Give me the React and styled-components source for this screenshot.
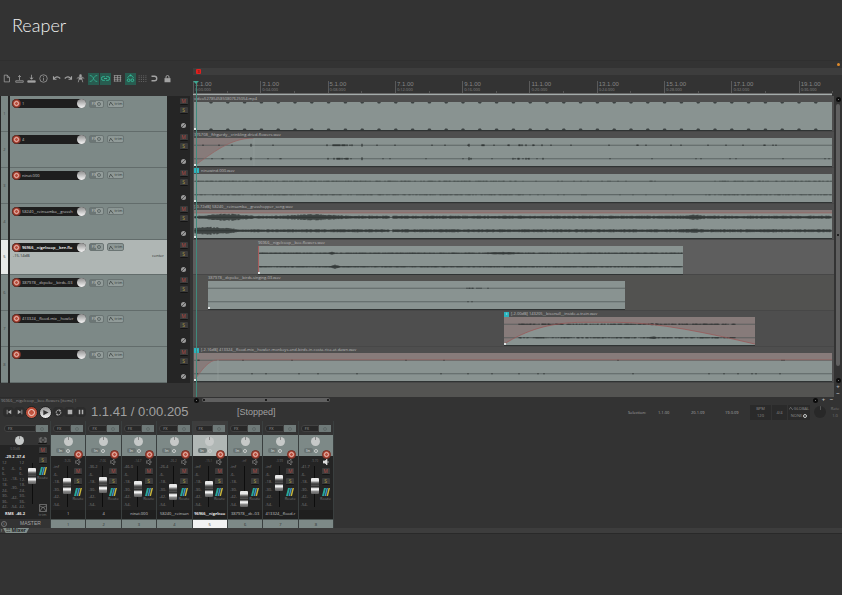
import React, { useState } from "react";
import styled, { createGlobalStyle, css } from "styled-components";

const TRACKS = [
  { id: 1, name: "1", short: "1", peak: "-inf", vol: "-9.26", fader: 54 },
  { id: 2, name: "4", short: "4", peak: "-36.2", vol: "-7.06", fader: 58 },
  { id: 3, name: "ninat.000", short: "ninat.000", peak: "-46.0", vol: "-14.7", fader: 42 },
  { id: 4, name: "58240__reinsamba__grassh", short: "58240__reinsan", peak: "-26.4", vol: "-26.2", fader: 30 },
  { id: 5, name: "96966__nigelcoop__bee-flo", short: "96966__nigelcoo", peak: "-inf", vol: "-15.1", fader: 42 },
  { id: 6, name: "387978__dcpoke__birds..03", short: "387978__dc..03", peak: "-inf", vol: "-inf", fader: 2 },
  { id: 7, name: "413324__flood-mix__howler", short: "413324__flood-r", peak: "-inf", vol: "-3.99", fader: 66 },
  { id: 8, name: "", short: "", peak: "-41.7", vol: "-9.70", fader: 54, loud: true },
];

// start and length are in timeline units, the whole timeline is 638 long
const TIMELINE = 638;
const CLIPS = [
  { title: "video5278545850807625054.mp4", start: 0, length: 638, wave: "ticks" },
  { title: "376708__fthgurdy__crinkling-dried-flowers.wav", start: 0, length: 638, wave: "crackle", fadeIn: 60 },
  { title: "ninawind.000.wav", start: 0, length: 638, wave: "wind", badge: true },
  { title: "[-0.72dB] 58240__reinsamba__grasshopper_song.wav", start: 0, length: 638, wave: "grass", gain: 3 },
  { title: "96966__nigelcoop__bee-flowers.wav", start: 64, length: 425, wave: "bees", edge: true },
  { title: "387978__dcpoke__birds-singing-03.wav", start: 14, length: 417, wave: "birds" },
  { title: "[-2.00dB] 143205__bisonull__inside-a-train.wav", start: 310, length: 251, wave: "train", badge: true, arch: true },
  { title: "[-2.16dB] 413324__flood-mix__howler-monkeys-and-birds-in-costa-rica-at-dawn.wav", start: 0, length: 638, wave: "dawn", badge: true, gain: 7, fadeIn: 24 },
];

const RULER = [
  ["1.1.00", "0:00.000"],
  ["3.1.00", "0:04.000"],
  ["5.1.00", "0:08.000"],
  ["7.1.00", "0:12.000"],
  ["9.1.00", "0:16.000"],
  ["11.1.00", "0:20.000"],
  ["13.1.00", "0:24.000"],
  ["15.1.00", "0:28.000"],
  ["17.1.00", "0:32.000"],
  ["19.1.00", "0:36.000"],
];

function random(seed) {
  let s = seed;
  return () => {
    s = (s * 16807) % 2147483647;
    return s / 2147483647;
  };
}

const near = (x, c, w) => Math.max(0, 1 - Math.abs(x - c) / w);

// height of the wave on one side of its centre line
const LEVELS = {
  crackle: (x, r, lower) => {
    const burst = near(x, 145, 14) + near(x, 332, 20) * 0.3 + near(x, 280, 14) * 0.2;
    if ([57, 168, 275].includes(x)) return 1.5;
    if (r > 0.95) return lower ? 0.5 : 0.7;
    return r < burst ? 0.9 : 0;
  },
  wind: (x, r) => {
    const busy = x < 330 || x > 520;
    return r > (busy ? 0.5 : 0.92) ? 0.2 + r * 0.4 : 0.1;
  },
  grass: (x, r, lower) => {
    const bump = lower
      ? near(x, 15, 30) * 3.4 + near(x, 500, 15) * 0.6
      : near(x, 32, 28) * 2.6 + near(x, 118, 40) * 1.8 + near(x, 500, 14) * 1.3;
    if (x > 195 && x < 199) return 0.2;
    return 0.9 + r * 0.7 + Math.min(bump, 2.4) * (0.7 + r * 0.3);
  },
  bees: (x, r, lower) => {
    const bump = lower ? near(x, 77, 5) * 1.6 : near(x, 74, 3) + near(x, 245, 22) * 0.7;
    return 0.3 + r * 0.4 + bump;
  },
  birds: (x, r, lower) => (x > 258 && x < 282 && r > (lower ? 0.93 : 0.6) ? 0.5 : 0),
  train: (x, r) => (x > 14 && x < 232 && r > 0.2 ? 0.2 + r * 0.5 + near(x, 150, 6) * 0.7 : 0),
  dawn: (x, r, lower) => (r > (lower ? 0.975 : 0.99) ? 0.6 : 0),
};

function wavePath(kind, length, y, lower) {
  const next = random(kind.length * 7919 + (lower ? 31 : 17));
  let d = "";
  for (let x = 1; x < length; x++) {
    const a = LEVELS[kind](x, next(), lower);
    if (a > 0) d += `M${x} ${(y - a).toFixed(1)}V${(y + a).toFixed(1)}`;
  }
  return d;
}

function tickPath(length) {
  let d = "";
  for (let x = 17; x < length; x += 16.8) {
    d += `M${x - 2} 0h4l-1 1.6h-2zM${x - 2} 29h4l-1-1.6h-2z`;
  }
  return d;
}

function Wave({ clip }) {
  const { length: w, wave, fadeIn, gain = 0, arch, edge } = clip;
  const archPath = `M0 28C22 14 45 5.500 80 5.500H112C155 5.500 205 17 ${w} 28`;
  const fadePath = `${29}C${fadeIn * 0.3} ${16 + gain / 3} ${fadeIn * 0.6} ${gain} ${fadeIn} ${gain}`;
  return (
    <svg width="100%" height="100%" viewBox={`0 0 ${w} 29`} preserveAspectRatio="none" aria-hidden="true">
      {gain > 0 && <path d={`M0 0H${w}V${gain}H0z`} fill="#877b7a" />}
      {fadeIn && <path d={`M0 ${gain}V${fadePath}z`} fill="#877b7a" />}
      {arch && <path d={`${archPath}V0H0z`} fill="#877b7a" />}
      {wave === "ticks" ? (
        <path d={tickPath(w)} fill="#3c4242" />
      ) : (
        <>
          <path d={`M0 7.5H${w}M0 21.5H${w}`} stroke="#4b5251" strokeWidth="0.7" />
          <path
            d={wavePath(wave, w, 7.5, false) + wavePath(wave, w, 21.5, true)}
            stroke={wave === "wind" ? "#3d4443" : "#1c2020"}
            strokeWidth="1"
            opacity="0.9"
          />
        </>
      )}
      {gain > 0 && <path d={`M${fadeIn || 0} ${gain}H${w}`} stroke="#97605f" strokeWidth="0.7" />}
      {fadeIn && (
        <>
          <path d={`M0 ${fadePath}`} fill="none" stroke="#97605f" strokeWidth="0.7" />
          <path d={`M${fadeIn} ${gain}V29`} stroke="#98a2a0" strokeWidth="0.6" />
        </>
      )}
      {arch && <path d={archPath} fill="none" stroke="#9c5252" strokeWidth="0.7" />}
      {edge && <path d="M0.5 0V29" stroke="#a85c5c" />}
      <path d="M0 27h2v2H0z" fill="#dfe4e3" />
    </svg>
  );
}

const TOOLS = [
  { label: "New project", art: <path d="M3 1.5h4l3 3v6H3zM7 1.5v3h3" /> },
  { label: "Open project", art: <path d="M1 9v2h10V9zM6 8V2M4 4l2-2 2 2" /> },
  { label: "Save project", art: <path d="M1 9h10v2H1zM6 1v6M4 5l2 2 2-2" />, fill: true },
  { label: "Project settings", art: <path d="M6 1a5 5 0 100 10A5 5 0 006 1zM6 5v4M6 3v1" /> },
  { label: "Undo", art: <path d="M2 3v4h4M2 7c3-4 6-4 9-1" strokeWidth="1.500" /> },
  { label: "Redo", art: <path d="M10 3v4H6M10 7C7 3 4 3 1 6" strokeWidth="1.500" /> },
  { label: "Metronome", art: <path d="M5 1h2v3H5zM4 5h4v2H4zM4 7L3 11M8 7l1 4M1 6l3-2M11 6L8 4" />, fill: true },
  { label: "Crossfade", on: true, art: <path d="M1 2c6 0 4 8 10 8M1 10c6 0 4-8 10-8" /> },
  { label: "Grouping", on: true, art: <path d="M5 8.500H3a2.500 2.500 0 010-5h2M7 3.500h2a2.500 2.500 0 010 5H7M4 6h4" strokeWidth="1.300" /> },
  { label: "Ripple edit", art: <path d="M1 2h10M1 4.500h10M1 7h10M1 9.500h10M2 2v8M6 2v8M10 2v8" strokeWidth="0.900" /> },
  { label: "Envelopes", on: true, art: <path d="M2 5l4-4 4 4M6 1v2M3.500 6.500a1.800 1.800 0 100 3.600 1.800 1.800 0 000-3.600zM8.500 6.500a1.800 1.800 0 100 3.600 1.800 1.800 0 000-3.600z" strokeWidth="1.300" /> },
  { label: "Grid lines", art: <path d="M1.500 2v9M4.500 2v9M7.500 2v9M10.500 2v9" strokeDasharray="1 1.500" opacity="0.800" /> },
  { label: "Snap", art: <path d="M2 3h4a3 3 0 010 6H2" strokeWidth="1.800" /> },
  { label: "Lock", art: <path d="M4 6V4a2 2 0 014 0v2" strokeWidth="1.300" />, body: true },
];

function App() {
  const [selected, setSelected] = useState(5);

  return (
    <Page>
      <GlobalStyle />
      <Title>
        <h1>Reaper</h1>
      </Title>

      <Workspace>
        {/* track control panel */}
        <Panel>
          <Toolbar>
            {TOOLS.map((tool) => (
              <ToolButton key={tool.label} $on={tool.on} aria-label={tool.label}>
                <svg viewBox="0 0 12 12" width="9" height="9">
                  <g fill={tool.fill ? "currentColor" : "none"} stroke="currentColor">
                    {tool.art}
                  </g>
                  {tool.body && <path d="M2 5.500h8v5.500H2z" fill="currentColor" />}
                </svg>
              </ToolButton>
            ))}
          </Toolbar>
          <Rows>
            {TRACKS.map((track) => (
              <Track key={track.id} track={track} selected={track.id === selected} onSelect={setSelected} />
            ))}
          </Rows>
          <Filler />
          <Status>96966__nigelcoop__bee-flowers [items] 1</Status>
        </Panel>

        {/* timeline */}
        <Arrange>
          <Alert />
          <MarkerBar>
            <Marker>3</Marker>
          </MarkerBar>
          <Timeline>
            <Ruler>
              {RULER.map(([beat, time]) => (
                <Mark key={beat}>
                  <b>{beat}</b>
                  <span>{time}</span>
                </Mark>
              ))}
            </Ruler>
            <LoopLine />
            <Lanes>
              {CLIPS.map((clip, i) => (
                <Lane key={clip.title} $selected={i + 1 === selected} $odd={i === 5}>
                  <ClipBox
                    style={{
                      marginLeft: `${(clip.start / TIMELINE) * 100}%`,
                      width: `${(clip.length / TIMELINE) * 100}%`,
                    }}
                  >
                    <ClipTitle>
                      {clip.badge && <Badge>i</Badge>}
                      {clip.title}
                    </ClipTitle>
                    <ClipBody>
                      <Wave clip={clip} />
                    </ClipBody>
                  </ClipBox>
                </Lane>
              ))}
            </Lanes>
            <EmptyLane />
            <Playhead />
          </Timeline>
          <VerticalScroll>
            <Dot />
            <Thumb />
            <Dot />
            <Zoom aria-label="Zoom in vertically">+</Zoom>
            <Zoom aria-label="Zoom out vertically">−</Zoom>
          </VerticalScroll>
          <HorizontalScroll>
            <Dot />
            <HorizontalThumb>
              <i />
              <i />
              <i />
            </HorizontalThumb>
            <Spacer />
            <Dot />
            <Zoom aria-label="Zoom in">+</Zoom>
            <Zoom aria-label="Zoom out">−</Zoom>
          </HorizontalScroll>
        </Arrange>
      </Workspace>

      <Transport>
        <Controls>
          <ControlButton aria-label="Go to start">
            <svg viewBox="0 0 8 8" width="6" height="6"><path d="M1 1h1v6H1zM7 1v6L2.500 4z" /></svg>
          </ControlButton>
          <ControlButton aria-label="Go to end">
            <svg viewBox="0 0 8 8" width="6" height="6"><path d="M6 1h1v6H6zM1 1v6l4.500-3z" /></svg>
          </ControlButton>
          <BigButton $red aria-label="Record">
            <Ring />
          </BigButton>
          <BigButton aria-label="Play">
            <svg viewBox="0 0 8 8" width="7" height="7"><path d="M1.500 1v6L7.500 4z" fill="#333" /></svg>
          </BigButton>
          <ControlButton aria-label="Repeat">
            <svg viewBox="0 0 8 8" width="7" height="7">
              <path d="M1.500 5a2.700 2.700 0 014-3.300M6.500 3a2.700 2.700 0 01-4 3.300" fill="none" stroke="#aaa" />
              <path d="M5 0l2 2-2 1zM3 8L1 6l2-1z" />
            </svg>
          </ControlButton>
          <ControlButton aria-label="Stop">
            <svg viewBox="0 0 8 8" width="6" height="6"><path d="M1 1h6v6H1z" /></svg>
          </ControlButton>
          <ControlButton aria-label="Pause">
            <svg viewBox="0 0 8 8" width="6" height="6"><path d="M1 1h2v6H1zM5 1h2v6H5z" /></svg>
          </ControlButton>
        </Controls>
        <Clock>1.1.41 / 0:00.205</Clock>
        <State>[Stopped]</State>
        <Selection>
          <span>Selection:</span>
          <span>1.1.00</span>
          <span>20.1.09</span>
          <span>19.0.09</span>
        </Selection>
        <Info $width={21}>
          <span>BPM</span>
          <span>120</span>
        </Info>
        <Info $width={15}>
          <span>4/4</span>
        </Info>
        <Info $width={22}>
          <span>
            <svg viewBox="0 0 6 4" width="5" height="4"><path d="M0 4l2-3 2 3 1-1" fill="none" stroke="#888" strokeWidth="0.700" /></svg>
            GLOBAL
          </span>
          <span>
            NONE <Gear />
          </span>
        </Info>
        <RateKnob aria-label="Playback rate" />
        <Rate>
          <span>Rate</span>
          <span>1.0</span>
        </Rate>
      </Transport>

      <Mixer>
        <Master />
        {TRACKS.map((track) => (
          <Channel key={track.id} track={track} selected={track.id === selected} />
        ))}
      </Mixer>
      <Dock>
        <span>!</span>
        <DockTab>☷ Mixer</DockTab>
      </Dock>
    </Page>
  );
}

export default App;

function Track({ track, selected, onSelect }) {
  return (
    <Row>
      <RowNumber $selected={selected} onClick={() => onSelect(track.id)}>
        {track.id}
      </RowNumber>
      <RowPanel $selected={selected}>
        <RowTop>
          <NamePill>
            <Arm aria-label={`Arm track ${track.id}`}>
              <i />
            </Arm>
            <NameInput $selected={selected} defaultValue={track.name} aria-label={`Name of track ${track.id}`} />
            <VolumeKnob aria-label={`Volume of track ${track.id}`} />
          </NamePill>
          <SmallButton $width={15} $split>
            <span>FX</span>
            <Power />
          </SmallButton>
          <SmallButton $width={17}>
            <svg viewBox="0 0 6 5" width="5" height="5"><path d="M0 5l2-4 3 4" fill="none" stroke="#2e3434" strokeWidth="0.800" /></svg>
            trim
          </SmallButton>
        </RowTop>
        {selected && (
          <RowInfo>
            <span>-15.14dB</span>
            <span>center</span>
          </RowInfo>
        )}
      </RowPanel>
      <RowButtons>
        <MuteButton aria-label={`Mute track ${track.id}`}>M</MuteButton>
        <SoloButton aria-label={`Solo track ${track.id}`}>S</SoloButton>
        <Phase aria-label={`Invert phase of track ${track.id}`} />
      </RowButtons>
    </Row>
  );
}

function RouteIcon() {
  return (
    <svg viewBox="0 0 8 8" width="8" height="8">
      <path d="M2 0h2L2 8H0z" fill="#28a898" />
      <path d="M4.500 0h1.500l-2 8H2.500z" fill="#3f8fc4" />
      <path d="M6.500 0H8L6 8H4.500z" fill="#c8b53c" />
    </svg>
  );
}

function Channel({ track, selected }) {
  return (
    <Strip>
      <FxRow $selected={selected}>
        <FxLabel>FX</FxLabel>
        <FxPower>
          <Power />
        </FxPower>
      </FxRow>
      <PanPanel $selected={selected}>
        <PanKnob aria-label={`Pan of channel ${track.id}`} />
        <InputRow>
          <InButton>In</InButton>
          <Gear />
        </InputRow>
        <ChannelArm aria-label={`Arm channel ${track.id}`}>
          <i />
        </ChannelArm>
      </PanPanel>
      <ChannelBody>
        <Scale>
          <span>{track.peak}</span>
          {["-6-", "-18-", "-30-", "-42-", "-54-"].map((db) => (
            <span key={db}>{db}</span>
          ))}
        </Scale>
        <FaderColumn>
          <small>{track.vol}</small>
          <Fader type="range" min="0" max="100" defaultValue={track.fader} aria-label={`Volume of channel ${track.id}`} />
        </FaderColumn>
        <ChannelButtons>
          <svg viewBox="0 0 6 6" width="6" height="6">
            <path d="M0 2h2l2-2v6L2 4H0zM5 2v2" fill={track.loud ? "#ddd" : "none"} stroke={track.loud ? "#ddd" : "#888"} strokeWidth="0.700" />
          </svg>
          <MuteButton aria-label={`Mute channel ${track.id}`}>M</MuteButton>
          <SoloButton aria-label={`Solo channel ${track.id}`}>S</SoloButton>
          <RouteButton>
            <RouteIcon />
            Route
          </RouteButton>
        </ChannelButtons>
      </ChannelBody>
      <ChannelName $selected={selected}>{track.short}</ChannelName>
      <ChannelNumber $selected={selected}>{track.id}</ChannelNumber>
    </Strip>
  );
}

function Master() {
  const scale = ["12", "6", "6-", "12-", "18-", "24-", "30-", "36-", "42-"];
  return (
    <Strip>
      <FxRow $master>
        <FxLabel>FX</FxLabel>
        <FxPower>
          <Power />
        </FxPower>
      </FxRow>
      <MasterTop>
        <PanKnob aria-label="Master pan" />
        <MonoButton aria-label="Mono">
          <svg viewBox="0 0 8 6" width="8" height="6">
            <path d="M3 1H1v4h2M5 1h2v4H5M2.500 3h3" fill="none" stroke="#888" strokeWidth="0.800" />
          </svg>
        </MonoButton>
      </MasterTop>
      <MasterBody>
        <MasterMeter>
          <small>0.00dB</small>
          <strong>-29.2 -37.4</strong>
          <MeterScales>
            <Scale $tight>{scale.map((n, i) => <span key={i}>{n}</span>)}</Scale>
            <Scale>{["-6-", "-18-", "-30-", "-42-", "-54-"].map((n) => <span key={n}>{n}</span>)}</Scale>
            <Scale $tight>{scale.map((n, i) => <span key={i}>{n}</span>)}</Scale>
          </MeterScales>
          <strong>RMS &nbsp;-46.2</strong>
        </MasterMeter>
        <MasterFader>
          <Fader type="range" min="0" max="100" defaultValue="82" aria-label="Master volume" />
        </MasterFader>
        <MasterButtons>
          <MuteButton aria-label="Mute master">M</MuteButton>
          <SoloButton aria-label="Solo master">S</SoloButton>
          <RouteButton>
            <RouteIcon />
            Route
          </RouteButton>
          <EnvelopeButton>
            <svg viewBox="0 0 9 9" width="8" height="8">
              <path d="M0.500 0.500h8v8h-8zM1 8l3.500-5L8 8M1 2l3 2M8 2L5 4" fill="none" stroke="#888" strokeWidth="0.800" />
            </svg>
            trim
          </EnvelopeButton>
        </MasterButtons>
      </MasterBody>
      <MasterFooter>
        <span>i</span>
        MASTER
      </MasterFooter>
    </Strip>
  );
}

const GlobalStyle = createGlobalStyle`
  * {
    box-sizing: border-box;
  }
  body {
    margin: 0;
    background-color: #333333;
    font-family: "Open Sans", "Liberation Sans", sans-serif;
  }
  button, input {
    border: none;
    margin: 0;
    padding: 0;
    background: none;
    font-family: inherit;
    font-size: 4px;
    color: inherit;
  }
  svg {
    display: block;
    flex: none;
  }
`;

const center = css`
  display: flex;
  align-items: center;
  justify-content: center;
`;

const Page = styled.div`
  min-height: 100vh;
  color: #8c8c8c;
  font-size: 4px;
  line-height: 5px;
  overflow: hidden;
`;

const Title = styled.header`
  height: 61px;
  padding: 13px 12px;
  border-bottom: 1px solid #2f2f2f;
  h1 {
    margin: 0;
    font-family: Lato, sans-serif;
    font-size: 18px;
    line-height: 24px;
    font-weight: 300;
    color: #f2f2f2;
  }
`;

const Workspace = styled.main`
  display: grid;
  grid-template-columns: 193px 1fr;
`;

/* left side */
const Panel = styled.section`
  display: flex;
  flex-direction: column;
`;
const Toolbar = styled.div`
  display: flex;
  align-items: center;
  height: 35px;
  padding: 0 19px 0 1px;
`;
const ToolButton = styled.button`
  ${center}
  flex: 1;
  height: 12px;
  color: ${({ $on }) => ($on ? "#35b795" : "#a3a3a3")};
  background-color: ${({ $on }) => ($on ? "#285c50" : "transparent")};
  border-right: 1px solid #333;
`;
const Rows = styled.div`
  display: grid;
  grid-template-rows: repeat(8, 1fr);
  height: 287px;
  margin-right: 3px;
  background-color: #252525;
`;
const Row = styled.div`
  display: grid;
  grid-template-columns: 9px 1fr 23px;
  padding-left: 1px;
  min-height: 0;
`;
const RowNumber = styled.button`
  ${center}
  margin-right: 2px;
  color: #3b4141;
  background-color: ${({ $selected }) => ($selected ? "#e8eae9" : "#7b8785")};
  border-bottom: 1px solid #626c6b;
`;
const RowPanel = styled.div`
  background-color: ${({ $selected }) => ($selected ? "#afb6b4" : "#7d8987")};
  border-bottom: 1px solid #626c6b;
  padding: 3px 2px;
  min-width: 0;
`;
const RowTop = styled.div`
  display: flex;
  align-items: center;
  gap: 3px;
`;
const NamePill = styled.div`
  display: flex;
  align-items: center;
  width: 74px;
  height: 9px;
  border-radius: 5px;
  background-color: #1e1e1e;
`;
const Arm = styled.button`
  ${center}
  flex: none;
  width: 9px;
  height: 9px;
  border-radius: 50%;
  background-color: #b94f3e;
  border: 1px solid #6d2d24;
  i {
    width: 5px;
    height: 5px;
    border: 1px solid #e6bfb7;
    border-radius: 50%;
  }
`;
const NameInput = styled.input`
  flex: 1;
  min-width: 0;
  padding-left: 1px;
  outline: none;
  font-weight: ${({ $selected }) => ($selected ? "600" : "normal")};
  color: ${({ $selected }) => ($selected ? "#ffffff" : "#c4c4c4")};
`;
const knob = css`
  flex: none;
  width: 9px;
  height: 9px;
  border-radius: 50%;
`;
const VolumeKnob = styled.button`
  ${knob}
  background-image: linear-gradient(#8d8d8d, #f6f6f6);
`;
const SmallButton = styled.button`
  ${center}
  width: ${({ $width }) => $width}px;
  height: 8px;
  gap: 1px;
  line-height: 6px;
  color: #333939;
  border: 1px solid #6b7574;
  border-radius: 2px;
  background-image: ${({ $split }) =>
    $split ? "linear-gradient(90deg, #6c7675 50%, #929c9a 50%)" : "linear-gradient(#8a9593, #929c9a)"};
  span {
    color: #d0d5d4;
  }
`;
const Power = styled.i`
  width: 4px;
  height: 4px;
  border: 1px solid #5f6968;
  border-radius: 50%;
`;
const RowInfo = styled.div`
  display: flex;
  justify-content: space-between;
  padding: 1px 1px;
  color: #272b2b;
`;
const RowButtons = styled.div`
  display: flex;
  flex-direction: column;
  align-items: center;
  gap: 2px;
  padding: 2px 0 0 10px;
`;
const MuteButton = styled.button`
  ${center}
  width: 8px;
  height: 7px;
  font-size: 5px;
  line-height: 6px;
  color: #b04842;
  background-color: #3b3b3b;
  border-bottom: 1px solid #141414;
  border-radius: 1px;
`;
const SoloButton = styled(MuteButton)`
  color: #aa9c42;
`;
const MonoButton = styled(MuteButton)`
  width: 9px;
`;
const Phase = styled.button`
  width: 5px;
  height: 5px;
  margin-top: 7px;
  border-radius: 50%;
  background-image: linear-gradient(135deg, #9a9a9a 40%, #555 45%, #555 55%, #9a9a9a 60%);
`;
const Filler = styled.div`
  flex: 1;
`;
const Status = styled.div`
  height: 6px;
  padding-left: 1px;
  border-top: 1px solid #2c2c2c;
  color: #8c8c8c;
`;

/* timeline */
const Arrange = styled.section`
  display: grid;
  grid-template-columns: 1fr 8px;
  grid-template-rows: 7px 7px auto 6px;
`;
const Alert = styled.i`
  grid-column: 1 / 3;
  justify-self: end;
  width: 3px;
  height: 3px;
  margin: 2px 2px 0 0;
  border-radius: 50%;
  background-color: #e08a2a;
`;
const MarkerBar = styled.div`
  grid-column: 1 / 3;
  padding: 1px 3px;
  background-color: #3d3d3d;
`;
const Marker = styled.button`
  ${center}
  width: 5px;
  height: 5px;
  border-radius: 1px;
  color: #4b0c0c;
  background-color: #e0211f;
`;
const Timeline = styled.div`
  position: relative;
  min-width: 0;
`;
const Ruler = styled.div`
  display: flex;
  align-items: flex-end;
  height: 18px;
  overflow: hidden;
`;
const Mark = styled.div`
  display: flex;
  flex-direction: column;
  flex: 0 0 10.5%;
  height: 12px;
  padding-left: 1px;
  border-left: 1px solid #5a5a5a;
  color: #858585;
  background: linear-gradient(#555, #555) 50% 100% / 1px 2px no-repeat;
  b {
    font-family: "Liberation Sans", Arial, sans-serif;
    font-size: 6px;
    line-height: 6px;
    font-weight: normal;
  }
`;
const LoopLine = styled.div`
  height: 3px;
  margin-right: 2px;
  border-top: 1px solid #666;
  background-color: #a4abaa;
  border-bottom: 1px solid #555;
`;
const Lanes = styled.div`
  display: grid;
  grid-template-rows: repeat(8, 1fr);
  height: 287px;
`;
const Lane = styled.div`
  min-height: 0;
  padding: 0 2px 0 1px;
  background-color: ${({ $selected, $odd }) => ($selected ? "#5e5e5e" : $odd ? "#525250" : "#4e4e4e")};
  border-bottom: 1px solid #474747;
`;
const ClipBox = styled.article`
  display: flex;
  flex-direction: column;
`;
const ClipTitle = styled.div`
  display: flex;
  align-items: center;
  gap: 2px;
  height: 6px;
  line-height: 6px;
  color: #bdbdbd;
  white-space: nowrap;
`;
const Badge = styled.i`
  ${center}
  width: 5px;
  height: 5px;
  font-style: normal;
  color: #fff;
  background-color: #2ab3bd;
`;
const ClipBody = styled.div`
  height: 29px;
  background-color: #899391;
  border-bottom: 1px solid #2f3333;
`;
const EmptyLane = styled.div`
  height: 14px;
  background-color: #545452;
`;
const Playhead = styled.div`
  position: absolute;
  top: 6px;
  bottom: 0;
  left: 3px;
  width: 1px;
  background-color: #3f8a7c;
  &::before {
    content: "";
    position: absolute;
    left: -3px;
    border: 3px solid transparent;
    border-top-color: #3fa692;
  }
`;
const VerticalScroll = styled.div`
  display: flex;
  flex-direction: column;
  align-items: center;
  gap: 2px;
  padding-top: 22px;
`;
const Dot = styled.i`
  flex: none;
  width: 5px;
  height: 5px;
  border-radius: 50%;
  border: 2px solid #0c0c0c;
  background-color: #999;
`;
const Thumb = styled.div`
  ${center}
  flex: 1;
  width: 4px;
  max-height: 264px;
  margin-bottom: 10px;
  border-radius: 2px;
  background-color: #606060;
  &::before {
    content: "";
    width: 2px;
    height: 2px;
    background-color: #222;
  }
`;
const Zoom = styled.button`
  ${center}
  width: 5px;
  height: 5px;
  font-size: 6px;
  line-height: 5px;
  font-weight: bold;
  color: #b0b0b0;
`;
const HorizontalScroll = styled.div`
  grid-column: 1 / 3;
  display: flex;
  align-items: center;
  gap: 3px;
  padding: 0 8px 0 1px;
`;
const HorizontalThumb = styled.div`
  display: flex;
  align-items: center;
  justify-content: space-between;
  width: 20%;
  height: 4px;
  padding: 0 1px;
  border-radius: 2px;
  background-color: #606060;
  i {
    width: 2px;
    height: 2px;
    background-color: #1d1d1d;
  }
`;
const Spacer = styled.div`
  flex: 1;
`;

/* transport */
const Transport = styled.section`
  display: flex;
  align-items: center;
  height: 18px;
  padding-right: 2px;
`;
const Controls = styled.div`
  display: flex;
  align-items: center;
  flex: none;
  width: 91px;
  padding-left: 3px;
`;
const ControlButton = styled.button`
  ${center}
  width: 11px;
  height: 10px;
  background-color: #2c2c2c;
  border-radius: 4px;
  fill: #b0b0b0;
`;
const BigButton = styled.button`
  ${center}
  width: 13px;
  height: 13px;
  margin-right: 1px;
  border-radius: 50%;
  border: 1px solid #222;
  background-image: ${({ $red }) => ($red ? "linear-gradient(#b5452f, #c9604c)" : "linear-gradient(#909090, #f2f2f2)")};
`;
const Ring = styled.i`
  width: 7px;
  height: 7px;
  border: 1px solid #f3d9d2;
  border-radius: 50%;
`;
const Clock = styled.div`
  width: 146px;
  flex: none;
  font-family: "Liberation Sans", Arial, sans-serif;
  font-size: 13px;
  line-height: 16px;
  color: #a0a0a0;
`;
const State = styled.div`
  flex: 1;
  font-family: "Liberation Sans", Arial, sans-serif;
  font-size: 9px;
  line-height: 12px;
  color: #a0a0a0;
`;
const Selection = styled.div`
  display: grid;
  grid-template-columns: 30px 33px 34px 25px;
  color: #a8a8a8;
`;
const Info = styled.div`
  display: flex;
  flex-direction: column;
  align-items: center;
  justify-content: space-around;
  width: ${({ $width }) => $width}px;
  height: 15px;
  margin-right: 1px;
  background-color: #2a2a2a;
  color: #8c8c8c;
  span {
    display: flex;
    align-items: center;
  }
`;
const Gear = styled.i`
  width: 4px;
  height: 4px;
  margin-left: 1px;
  border: 1px solid #c9cccb;
  border-radius: 50%;
`;
const RateKnob = styled.button`
  width: 12px;
  height: 12px;
  margin: 0 4px 0 3px;
  border-radius: 50%;
  background: linear-gradient(#555, #555) 50% 0 / 1px 4px no-repeat #282828;
`;
const Rate = styled.div`
  display: flex;
  flex-direction: column;
  align-items: center;
  width: 10px;
  gap: 2px;
  color: #777;
`;

/* mixer */
const Mixer = styled.section`
  display: grid;
  grid-template-columns: 51px repeat(8, 1fr);
  max-width: 334px;
`;
const Strip = styled.div`
  display: flex;
  flex-direction: column;
  min-width: 0;
  border-right: 1px solid #3a3f3f;
`;
const FxRow = styled.div`
  display: flex;
  height: 14px;
  padding: ${({ $master }) => ($master ? "4px 2px 3px 4px" : "4px 2px 3px 2px")};
  background-color: ${({ $selected }) => ($selected ? "#3d3d3d" : "#333")};
`;
const FxLabel = styled.button`
  flex: 1;
  padding-left: 3px;
  text-align: left;
  color: #9a9a9a;
  background-color: #282828;
  border: 1px solid #424242;
  border-radius: 3px 0 0 3px;
`;
const FxPower = styled.button`
  ${center}
  width: 12px;
  background-color: #6f7a79;
`;
const PanPanel = styled.div`
  position: relative;
  height: 21px;
  padding-top: 2px;
  background-color: ${({ $selected }) => ($selected ? "#b0b7b5" : "#7d8987")};
`;
const PanKnob = styled.button`
  ${knob}
  display: block;
  margin: 0 auto;
  background: linear-gradient(#888, #888) 50% 0 / 1px 3px no-repeat #c6c9c8;
`;
const InputRow = styled.div`
  display: flex;
  align-items: center;
  height: 7px;
  padding-left: 5px;
  margin-top: 1px;
`;
const InButton = styled.button`
  width: 9px;
  height: 5px;
  line-height: 5px;
  border-radius: 2px;
  color: #e0e3e2;
  background-color: #6b7574;
`;
const ChannelArm = styled(Arm)`
  position: absolute;
  right: 2px;
  bottom: -3px;
`;
const ChannelBody = styled.div`
  display: flex;
  justify-content: space-between;
  height: 54px;
  padding: 3px 2px 0 2px;
  background-color: #242424;
`;
const Scale = styled.div`
  display: flex;
  flex-direction: column;
  justify-content: space-between;
  padding-top: ${({ $tight }) => ($tight ? 0 : 5)}px;
  width: 9px;
  height: 48px;
  line-height: ${({ $tight }) => ($tight ? 4 : 5)}px;
  color: #7c7c7c;
  white-space: nowrap;
`;
const FaderColumn = styled.div`
  display: flex;
  flex-direction: column;
  align-items: center;
  width: 10px;
  gap: 2px;
  small {
    font-size: 3px;
    line-height: 5px;
    color: #6b6b6b;
  }
`;
const Fader = styled.input`
  appearance: none;
  writing-mode: vertical-lr;
  direction: rtl;
  width: 8px;
  height: 41px;
  background: linear-gradient(#0d0d0d, #0d0d0d) 50% 0 / 1px 100% no-repeat;
  &::-webkit-slider-thumb {
    appearance: none;
    width: 8px;
    height: 16px;
    border-radius: 1px;
    background-image: linear-gradient(#e8e8e8 0 3px, #8d8d8d 4px, #3a3a3a 6px, #555 8px, #111 9px, #d5d5d5 10px, #fafafa 12px, #8f8f8f 13px, #5f5f5f);
  }
`;
const ChannelButtons = styled.div`
  display: flex;
  flex-direction: column;
  align-items: center;
  width: 11px;
  gap: 3px;
`;
const RouteButton = styled.button`
  display: flex;
  flex-direction: column;
  align-items: center;
  line-height: 5px;
  color: #777;
`;
const ChannelName = styled.div`
  display: flex;
  justify-content: center;
  height: 9px;
  padding-top: 1px;
  white-space: nowrap;
  color: ${({ $selected }) => ($selected ? "#fff" : "#c4c4c4")};
  font-weight: ${({ $selected }) => ($selected ? "600" : "normal")};
  background-color: #1f1f1f;
`;
const ChannelNumber = styled.div`
  ${center}
  height: 9px;
  color: #2c3030;
  border-top: 1px solid #4d5554;
  background-color: ${({ $selected }) => ($selected ? "#f2f2f2" : "#7d8987")};
`;
const MasterTop = styled.div`
  display: flex;
  align-items: center;
  height: 10px;
  padding: 0 3px 0 0;
`;
const MasterBody = styled.div`
  display: flex;
  height: 74px;
  padding: 2px 2px 2px 2px;
  background-color: #242424;
`;
const MasterMeter = styled.div`
  display: flex;
  flex-direction: column;
  align-items: center;
  width: 26px;
  gap: 2px;
  small {
    font-size: 3px;
    line-height: 5px;
    color: #666;
  }
  strong {
    color: #e8e8e8;
    white-space: nowrap;
  }
`;
const MeterScales = styled.div`
  display: flex;
  justify-content: space-between;
  width: 100%;
`;
const MasterFader = styled.div`
  display: flex;
  padding: 16px 0 6px;
`;
const MasterButtons = styled(ChannelButtons)`
  margin-left: auto;
`;
const EnvelopeButton = styled(RouteButton)`
  margin-top: auto;
`;
const MasterFooter = styled.div`
  display: flex;
  align-items: center;
  height: 9px;
  gap: 13px;
  padding-left: 1px;
  font-family: "Liberation Sans", Arial, sans-serif;
  font-size: 5px;
  color: #a5a5a5;
  span {
    width: 6px;
    height: 6px;
    line-height: 4px;
    font-size: 4px;
    text-align: center;
    border: 1px solid #777;
    border-radius: 50%;
  }
`;
const Dock = styled.footer`
  display: flex;
  height: 6px;
  gap: 1px;
  padding-left: 1px;
  border-bottom: 1px solid #292929;
  background-color: #3d3d3d;
  color: #ddd;
`;
const DockTab = styled.button`
  width: 26px;
  font-size: 5px;
  line-height: 5px;
  font-weight: bold;
  color: #1d2222;
  background-color: #84908d;
  clip-path: polygon(0 0, 100% 0, 90% 100%, 10% 100%);
`;
